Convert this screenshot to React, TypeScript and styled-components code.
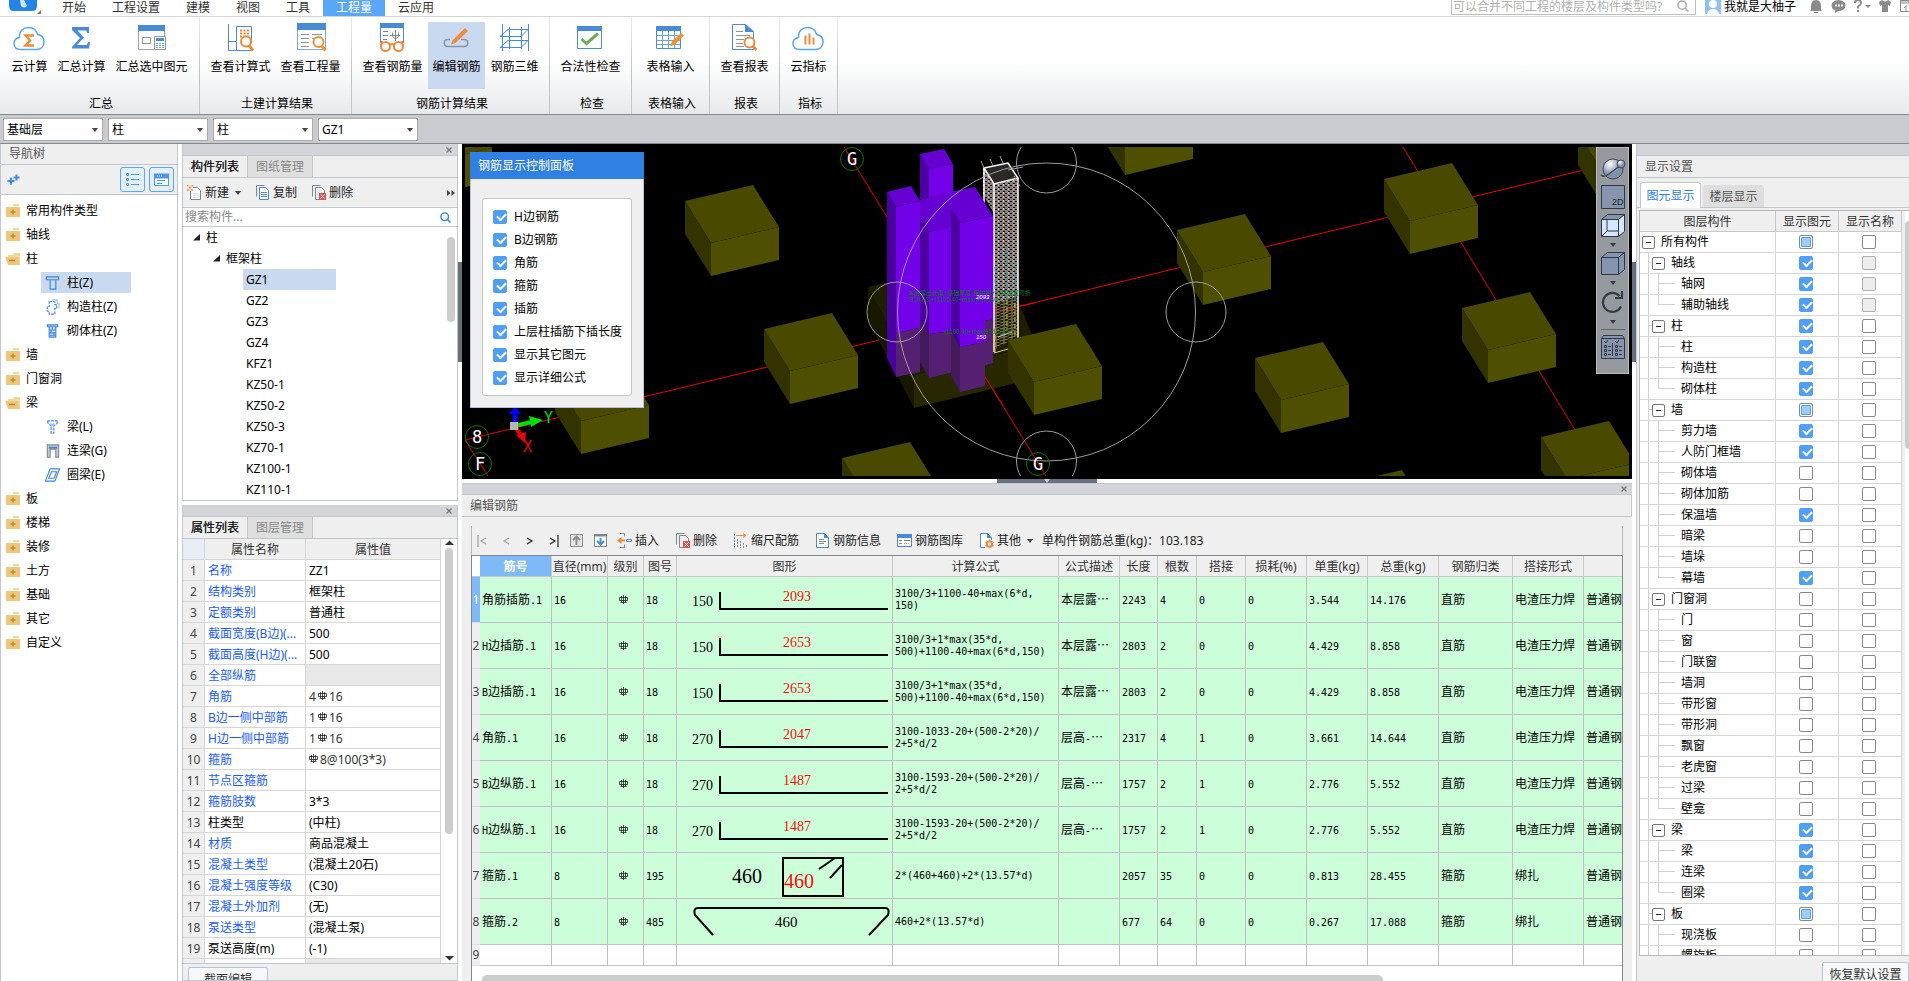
import React from 'react';
import styled, { createGlobalStyle, css } from 'styled-components';

const UI_FONT = '"Noto Sans", "Noto Sans CJK SC", sans-serif';
const LINE = '#c3c6cd';
const CELL_LINE = '#d6d6d6';
const PANEL = '#efefef';
const BLUE = '#4a8bd8';
const ORANGE = '#f08a3c';

const GlobalStyle = createGlobalStyle`
  * { box-sizing: border-box; }
  body { margin: 0; overflow: hidden; background: #fff; }
  body, button, input, select { font-family: ${UI_FONT}; font-size: 12px; line-height: 16px; color: #000; }
  button { background: none; border: 0; padding: 0; margin: 0; }
  table { border-collapse: separate; border-spacing: 0; }
  ul { list-style: none; margin: 0; padding: 0; }
  svg { display: block; flex: none; }
`;

const Page = styled.div`
  display: flex;
  flex-direction: column;
  height: 100vh;
  overflow: hidden;
  background: #fff;
`;

/* ---------- title bar ---------- */

const TitleBar = styled.header`
  display: flex;
  height: 17px;
  border-bottom: 1px solid #d4d4d4;
  overflow: hidden;
`;
const LogoCell = styled.div`
  width: 49px;
  padding-left: 8px;
`;
const MenuTab = styled.button<{ $active?: boolean }>`
  height: 16px;
  padding: 0 13px;
  line-height: 14px;
  color: #333;
  ${(p) => p.$active && css`background: #5aa6f8; color: #fff;`}
`;
const TitleTools = styled.div`
  display: flex;
  align-items: flex-start;
  height: 16px;
  margin-left: auto;
`;
const TopSearch = styled.label`
  display: flex;
  width: 245px;
  height: 15px;
  padding: 0 6px 0 1px;
  margin-right: 9px;
  border: 1px solid #bdbdbd;
  border-top: 0;
  input {
    flex: 1;
    min-width: 0;
    border: 0;
    padding: 0;
    height: 14px;
    outline: 0;
  }
  input::placeholder { color: #b0b0b0; }
`;
const UserName = styled.span`
  margin: 0 13px 0 3px;
  line-height: 13px;
`;
const TopIcon = styled.button<{ $w: number }>`
  width: ${(p) => p.$w}px;
  height: 14px;
  margin-right: 4px;
  flex: none;
`;

/* ---------- ribbon ---------- */

const Ribbon = styled.div`
  display: flex;
  height: 98px;
  border-bottom: 1px solid #85888d;
  background: linear-gradient(#fff 45%, #e7eaeb);
`;
const RibbonGroup = styled.section<{ $w: number }>`
  display: flex;
  flex-direction: column;
  align-items: center;
  width: ${(p) => p.$w}px;
  padding-top: 5px;
  border-right: 1px solid;
  border-image: linear-gradient(#eee, #bfbfbf 60%, #c8c8c8) 1;
`;
const RibbonRow = styled.div`
  display: flex;
  gap: 2px;
  height: 67px;
  margin-bottom: 7px;
`;
const RibbonButton = styled.button<{ $active?: boolean }>`
  display: flex;
  flex-direction: column;
  align-items: center;
  gap: 4px;
  padding: 1px 4px 0;
  white-space: nowrap;
  background: ${(p) => (p.$active ? '#c9d9ef' : 'transparent')};
`;
const RibbonTitle = styled.span`padding-left: 3px;`;

const FilterBar = styled.div`
  display: flex;
  gap: 5px;
  height: 29px;
  padding: 3px 3px;
  background: #c9cbd0;
  border-bottom: 1px solid #85888d;
`;
const SelectBox = styled.span`
  position: relative;
  width: 100px;
  select {
    appearance: none;
    width: 100px;
    height: 23px;
    padding: 0 3px;
    border: 1px solid #aaa;
    border-radius: 0;
    background: #fff;
  }
  svg { position: absolute; right: 5px; top: 10px; pointer-events: none; }
`;

/* ---------- workspace ---------- */

const Workspace = styled.main`
  flex: 1;
  min-height: 0;
  display: grid;
  grid-template-columns: 178px 276px minmax(0, 1fr) 273px;
  column-gap: 4px;
`;
const Panel = styled.section`
  display: flex;
  flex-direction: column;
  min-height: 0;
  min-width: 0;
  overflow: hidden;
  background: ${PANEL};
  border: solid ${LINE};
  border-width: 0 1px 1px;
`;
const NavPanel = styled(Panel)`border-bottom: 0;`;
const Strip = styled.div`
  display: flex;
  justify-content: flex-end;
  align-items: center;
  height: 12px;
  flex: none;
  padding-right: 4px;
  background: #d3d5da;
  border-bottom: 1px solid ${LINE};
  button { height: 8px; }
`;
const PanelTitle = styled.h2`
  flex: none;
  margin: 0;
  height: 22px;
  padding: 3px 8px;
  font-size: 12px;
  font-weight: normal;
  color: #555;
  border-bottom: 1px solid ${LINE};
`;
const NavTitle = styled(PanelTitle)`height: 21px; padding-top: 2px;`;
const NavTools = styled.div`
  display: flex;
  align-items: center;
  gap: 4px;
  height: 30px;
  flex: none;
  padding: 0 3px 0 6px;
  border-bottom: 1px solid ${LINE};
`;
const ViewToggle = styled.button`
  display: grid;
  place-items: center;
  width: 25px;
  height: 25px;
  border: 1px solid #5aa6f8;
  border-radius: 3px;
  background: #e3effb;
`;
const Spacer = styled.span`flex: 1;`;
const NavTree = styled.ul`
  && { padding: 4px 0; }
  display: flex;
  flex-direction: column;
  flex: 1;
  min-height: 0;
  overflow: hidden;
  background: #fff;
`;
const NavItem = styled.li`
  display: flex;
  align-items: center;
  gap: 4px;
  height: 24px;
  flex: none;
  padding-left: 4px;
`;
const NavChild = styled.li<{ $active?: boolean }>`
  display: flex;
  align-items: center;
  gap: 6px;
  width: 90px;
  height: 21px;
  flex: none;
  margin: 1px 0 2px 40px;
  padding-left: 3px;
  background: ${(p) => (p.$active ? '#c9d9ef' : 'transparent')};
`;

const MiddleColumn = styled.div`
  display: grid;
  grid-template-rows: 3fr 4fr;
  row-gap: 4px;
  min-height: 0;
`;
const Tabs = styled.div`
  display: flex;
  height: 22px;
  flex: none;
  border-bottom: 1px solid ${LINE};
`;
const Tab = styled.button<{ $active?: boolean }>`
  height: 21px;
  width: 65px;
  padding-top: 1px;
  border-right: 1px solid ${LINE};
  color: ${(p) => (p.$active ? '#222' : '#888')};
  background: ${(p) => (p.$active ? PANEL : '#dfdfdf')};
  ${(p) => p.$active && css`text-shadow: 0 0 0 #222;`}
`;
const ListTools = styled.div`
  display: flex;
  align-items: center;
  height: 30px;
  flex: none;
  gap: 14px;
  padding: 0 2px 0 4px;
  border-bottom: 1px solid ${LINE};
`;
const ToolButton = styled.button`
  display: flex;
  align-items: center;
  gap: 3px;
  color: #222;
  white-space: nowrap;
`;
const ListSearch = styled.label`
  display: flex;
  align-items: center;
  height: 19px;
  flex: none;
  padding: 0 6px 0 2px;
  background: #fff;
  border-bottom: 1px solid ${LINE};
  input { flex: 1; min-width: 0; border: 0; padding: 0; height: 16px; outline: 0; }
  input::placeholder { color: #888; }
`;
const ListBody = styled.div`
  display: flex;
  flex: 1;
  min-height: 0;
  overflow: hidden;
  background: #fff;
  padding-right: 2px;
  ul { flex: 1; }
`;
const ListItem = styled.li<{ $level: number }>`
  display: flex;
  align-items: center;
  gap: 6px;
  height: 21px;
  padding-left: ${(p) => 10 + p.$level * 20}px;
`;
const ListLeaf = styled.span<{ $active?: boolean }>`
  width: 93px;
  height: 21px;
  padding: 3px 3px 2px;
  background: ${(p) => (p.$active ? '#c9d9ef' : 'transparent')};
`;
const Thumb = styled.div<{ $h: string }>`
  width: 8px;
  height: ${(p) => p.$h};
  border-radius: 4px;
  background: #cdcdcd;
`;
const ListThumb = styled(Thumb)`margin-top: 10px;`;

const GridArea = styled.div`
  display: flex;
  flex: 1;
  min-height: 0;
  overflow: hidden;
  background: #fff;
  border-bottom: 1px solid ${LINE};
`;
const PropTable = styled.table`
  flex: none;
  width: 258px;
  height: max-content;
  table-layout: fixed;
  th, td {
    height: 21px;
    padding: 1px 3px 0;
    font-weight: normal;
    text-align: left;
    white-space: nowrap;
    overflow: hidden;
    border: solid ${CELL_LINE};
    border-width: 0 1px 1px 0;
  }
  thead th { text-align: center; color: #333; background: ${PANEL}; }
  thead th:first-child { background: #e9eef6; }
  tbody th { padding: 1px 0 0; text-align: center; color: #444; background: ${PANEL}; }
`;
const PropName = styled.td<{ $plain?: boolean }>`
  color: ${(p) => (p.$plain ? '#000' : '#1a5cff')};
`;
const PropValue = styled.td<{ $group?: boolean }>`
  background: ${(p) => (p.$group ? '#e8e8e8' : '#fff')};
`;
const RebarValue = styled.span`
  display: flex;
  gap: 2px;
  color: #333;
  svg { margin-top: 2px; }
`;
const ScrollColumn = styled.div`
  display: flex;
  flex-direction: column;
  align-items: center;
  flex: 1;
  min-width: 0;
  padding: 1px 0 2px;
  gap: 2px;
`;
const PropFooter = styled.div`
  height: 16px;
  flex: none;
  padding: 3px 0 0 5px;
  overflow: hidden;
`;
const OutlineButton = styled.button<{ $w: number }>`
  width: ${(p) => p.$w}px;
  height: 26px;
  flex: none;
  border: 1px solid #b8c3da;
  border-radius: 2px;
  background: #f7f8fa;
  color: #333;
`;

/* ---------- viewport ---------- */

const CenterColumn = styled.div`
  display: grid;
  grid-template-rows: 335fr 498fr;
  row-gap: 4px;
  min-width: 0;
  min-height: 0;
`;
const Viewport = styled.section`
  position: relative;
  min-height: 0;
  background: #000;
  > svg { width: 100%; height: 100%; }
`;
const Handle = styled.button<{ $side: 'left' | 'right' | 'bottom' }>`
  position: absolute;
  display: grid;
  place-items: center;
  background: #66707c;
  ${(p) => p.$side === 'left' && css`left: -4px; top: 118px; width: 4px; height: 100px;`}
  ${(p) => p.$side === 'right' && css`right: -4px; top: 118px; width: 4px; height: 100px;`}
  ${(p) => p.$side === 'bottom' && css`left: calc(50% - 50px); bottom: -4px; width: 100px; height: 4px;`}
`;
const Dialog = styled.div`
  position: absolute;
  left: 8px;
  top: 8px;
  width: 174px;
  background: ${PANEL};
  border: 1px solid #b9c4dc;
  border-top: 0;
  padding-bottom: 11px;
`;
const DialogTitle = styled.div`
  height: 27px;
  margin: 0 -1px 19px;
  padding: 6px 8px;
  color: #fff;
  background: #2f80e2;
`;
const DialogBox = styled.div`
  margin: 0 11px;
  padding: 6px 10px;
  border: 1px solid ${LINE};
  border-radius: 3px;
  background: #fff;
`;
const CheckRow = styled.label`
  display: flex;
  align-items: center;
  gap: 7px;
  height: 23px;
  white-space: nowrap;
`;
const Check = styled.input.attrs({ type: 'checkbox' })<{ $mixed?: boolean }>`
  appearance: none;
  position: relative;
  flex: none;
  width: 14px;
  height: 14px;
  margin: 0;
  border: 1px solid #8a8a8a;
  border-radius: 2px;
  background: #fff;
  &:checked { border-color: #4f9ff8; background: #4f9ff8; }
  &:checked::before {
    content: '';
    position: absolute;
    left: 3px;
    top: 2px;
    width: 7px;
    height: 4px;
    border: solid #fff;
    border-width: 0 0 2px 2px;
    transform: rotate(-45deg);
  }
  &:disabled { background: #ededed; border-color: #b0b0b0; }
  ${(p) => p.$mixed && css`
    &::after {
      content: '';
      position: absolute;
      inset: 1px;
      border: 1px solid #4f9ff8;
      border-radius: 1px;
      background: #a0cbfb;
    }
  `}
`;
const ViewTools = styled.div`
  position: absolute;
  right: 3px;
  top: 3px;
  width: 33px;
  height: 227px;
  padding-top: 10px;
  display: flex;
  flex-direction: column;
  align-items: center;
  gap: 5px;
  background: #96999e;
  border: 1px solid #b9bcc0;
`;
const ViewTool = styled.button`
  display: flex;
  flex-direction: column;
  align-items: center;
  gap: 6px;
`;
const ToolRule = styled.div`
  width: 24px;
  height: 1px;
  background: #6a6a6a;
`;

/* ---------- rebar editor ---------- */

const EditorPanel = styled(Panel)`border-width: 1px 0 0;`;
const EditorTitle = styled(PanelTitle)`border-right: 1px solid ${LINE};`;
const EditorStrip = styled(Strip)`height: 11px;`;
const EditorBody = styled.div`
  display: flex;
  flex-direction: column;
  flex: 1;
  min-height: 0;
  padding: 9px 9px 0;
`;
const EditorTools = styled.div`
  display: flex;
  align-items: center;
  height: 29px;
  flex: none;
  padding-left: 5px;
  gap: 16px;
  border: solid #b5b5bb;
  border-width: 0 1px 0 1px;
  white-space: nowrap;
  color: #222;
`;
const ToolCluster = styled.div`
  display: flex;
  align-items: center;
  gap: 9px;
`;
const StepButton = styled.button<{ $off?: boolean }>`
  width: 14px;
  height: 14px;
  svg path { stroke: ${(p) => (p.$off ? '#a0a0a0' : '#222')}; }
`;
const SheetFrame = styled.div`
  display: flex;
  flex-direction: column;
  flex: 1;
  min-height: 0;
  overflow: hidden;
  background: #fff;
  border: solid #85858f;
  border-width: 1px 1px 0 1px;
`;
const SheetTable = styled.table`
  width: 100%;
  table-layout: fixed;
  th, td {
    padding: 0 2px;
    font-weight: normal;
    text-align: left;
    white-space: nowrap;
    overflow: hidden;
    border: solid #c2bfc4;
    border-width: 0 1px 1px 0;
  }
  tr > :last-child { border-right: 0; }
  thead th {
    height: 21px;
    padding: 1px 0 0;
    text-align: center;
    color: #333;
    background: ${PANEL};
    border-color: #c9c9c9;
  }
  thead th:nth-child(2) { background: #7fbaf8; color: #fff; font-weight: bold; }
  thead th:first-child { background: #fff; border-right: 0; }
`;
const SheetRow = styled.tr<{ $empty?: boolean }>`
  td { height: ${(p) => (p.$empty ? 21 : 46)}px; background: ${(p) => (p.$empty ? '#fff' : '#ccffd9')}; }
`;
const RowHead = styled.th<{ $active?: boolean }>`
  && {
    padding: 0;
    text-align: center;
    border-right: 0;
    border-color: #ddd;
    color: ${(p) => (p.$active ? '#fff' : '#444')};
    background: ${(p) => (p.$active ? '#7fbaf8' : PANEL)};
  }
`;
const GradeBox = styled.span`
  display: flex;
  justify-content: center;
  padding-right: 4px;
`;
const ShapeCell = styled.td`
  && { padding: 0; }
  svg { width: 215px; height: 45px; }
`;
const Formula = styled.span`
  display: block;
  font: 10px/12px "DejaVu Sans Mono", monospace;
  white-space: pre-line;
`;
const Mono = styled.span`font: 10px/14px "DejaVu Sans Mono", monospace;`;
const Han = styled.span`font-family: "Noto Sans CJK SC", sans-serif;`;
const SheetScroll = styled.div`
  margin-top: auto;
  height: 6px;
  padding-left: 10px;
  overflow: hidden;
`;
const SheetThumb = styled.div`
  width: 79%;
  height: 10px;
  border-radius: 5px;
  background: #cdcdcd;
`;

/* ---------- display settings ---------- */

const DisplayPanel = styled(Panel)`border-width: 0 0 0 1px;`;
const CardTabs = styled.div`
  display: flex;
  align-items: flex-end;
  gap: 2px;
  height: 30px;
  flex: none;
  padding-left: 3px;
  border-bottom: 1px solid ${LINE};
`;
const CardTab = styled.button<{ $active?: boolean }>`
  width: 61px;
  height: ${(p) => (p.$active ? 26 : 22)}px;
  padding-top: 1px;
  margin-bottom: ${(p) => (p.$active ? -1 : 0)}px;
  border-radius: 3px 3px 0 0;
  color: ${(p) => (p.$active ? '#2f80e2' : '#555')};
  background: ${(p) => (p.$active ? '#fff' : '#dedede')};
  ${(p) => p.$active && css`border: 1px solid ${LINE}; border-bottom: 0;`}
`;
const DisplayArea = styled.div`
  display: flex;
  flex: 1;
  min-height: 0;
  margin: 2px 0 0 2px;
  overflow: hidden;
  border: solid #b8b8bc;
  border-width: 1px 0 1px 1px;
`;
const DisplayTable = styled.table`
  flex: none;
  width: 262px;
  height: max-content;
  table-layout: fixed;
  background: #fff;
  th, td {
    height: 21px;
    padding: 0;
    font-weight: normal;
    border: solid ${CELL_LINE};
    border-width: 0 1px 1px 0;
  }
  th { padding-top: 1px; color: #333; background: ${PANEL}; border-color: #c8c8c8; }
`;
const CheckCell = styled.td`
  && { padding: 0 2px 1px 0; }
  input { display: block; margin: 0 auto; }
`;
const TreeCell = styled.div`
  display: flex;
  align-items: center;
  height: 20px;
  overflow: hidden;
  white-space: nowrap;
`;
const Guide = styled.span<{ $w: number }>`
  width: ${(p) => p.$w}px;
  height: 20px;
  margin-left: 8px;
  border-left: 1px solid #d0d0d0;
  background: ${(p) => (p.$w === 4 ? 'linear-gradient(#d0d0d0, #d0d0d0) 0 9px / 4px 1px no-repeat' : 'none')};
`;
const Branch = styled.span<{ $last?: boolean }>`
  width: 17px;
  height: 20px;
  margin-right: 6px;
  background:
    linear-gradient(#d0d0d0, #d0d0d0) 0 0 / 1px ${(p) => (p.$last ? '10px' : '20px')} no-repeat,
    linear-gradient(#d0d0d0, #d0d0d0) 0 9px / 17px 1px no-repeat;
`;
const Expander = styled.button<{ $root?: boolean }>`
  display: grid;
  place-items: center;
  width: 13px;
  height: 13px;
  margin: 0 6px 0 ${(p) => (p.$root ? 2 : 0)}px;
  border: 1px solid #777;
  border-radius: 2px;
  background: #fff;
  &::before { content: ''; width: 5px; height: 1px; background: #222; }
`;
const EdgeScroll = styled.div`
  flex: 1;
  min-width: 0;
  margin-left: 3px;
  padding-top: 10px;
  overflow: hidden;
  background: #fff;
`;
const DisplayFooter = styled.div`
  display: flex;
  justify-content: flex-end;
  height: 25px;
  flex: none;
  padding-top: 6px;
  overflow: hidden;
`;

/* ---------- icons ---------- */

const Caret = ({ color = '#444' }: { color?: string }) => (
  <svg width="6" height="4" viewBox="0 0 6 4"><path d="M0 0h6L3 4z" fill={color} /></svg>
);
const ScrollArrow = ({ down }: { down?: boolean }) => (
  <svg width="9" height="6" viewBox="0 0 9 6"><path d={down ? 'M0 1h9L4.5 5.5z' : 'M0 5h9L4.5 .5z'} fill="#333" /></svg>
);
const CloseX = () => (
  <svg width="8" height="8" viewBox="0 0 8 8"><path d="M1.500 1.500l5 5M6.500 1.500l-5 5" stroke="#777" strokeWidth="1.300" /></svg>
);
const Magnifier = ({ color, size = 11 }: { color: string; size?: number }) => (
  <svg width={size} height={size} viewBox="0 0 11 11" fill="none" stroke={color} strokeWidth="1.400">
    <circle cx="4.700" cy="4.700" r="3.800" /><path d="M7.500 7.500l3 3" />
  </svg>
);
const RebarMark = () => (
  <svg width="9" height="9" viewBox="0 0 9 9" fill="none" stroke="#222">
    <path d="M.5 2.5h8v3h-8zM4.5 0v9M2.5 1v6M6.500 1v6" strokeWidth=".8" />
    <path d="M1.500 7.500h6" strokeWidth=".8" />
  </svg>
);
const Folder = ({ open }: { open?: boolean }) => (
  <svg width="17" height="14" viewBox="0 0 17 14">
    {open ? (
      <>
        <path d="M3 3h5l1-2h6v11H3z" fill="#f3d699" />
        <path d="M0 5h13l2 8H3z" fill="#ecc77d" />
        <path d="M4 8.500h6" stroke="#b98422" strokeWidth="1.500" />
      </>
    ) : (
      <>
        <path d="M8 0h6v2H8z" fill="#f3d699" />
        <path d="M1 3h14v10H1z" fill="#ecc77d" />
        <path d="M8 5.500v5M5.500 8h5" stroke="#c08c2c" strokeWidth="1.500" />
      </>
    )}
  </svg>
);

const NAV_ICONS: Record<string, React.ReactNode> = {
  column: <path d="M2.500 1.500h13v3h-3v10h-6v-10h-4zM5 4.500h9" />,
  tie: <><path d="M5.500 2.500h6v3h2v4h-2v6h-6v-3h-2v-5h2z" strokeDasharray="3 1" /><path d="M9 .5h5v4h2v5" stroke="#9cc0ea" /></>,
  masonry: <><path d="M3.500 1.500h11v2h-11zM5.500 4v10.500h7V4" fill="#cfe1f6" /><path d="M5.500 7h7M5.500 10h7M5.500 12.500h7M9 4v3M7.500 7v3M10.500 10v3" /></>,
  beam: <><path d="M3.500 1.500h11l-1 3-3 2v8h-3v-8l-3-2z" strokeDasharray="3 1" /><path d="M7 4l4 4M7 8l4-4" stroke="#9cc0ea" /></>,
  link: <><path d="M3.500 1.500h12v13h-3V6h-6v8.500h-3z" stroke="#848b94" fill="#c9ccd1" /><path d="M5 4.500h9" strokeWidth="2" /></>,
  ring: <><path d="M6.500 1.500h10l-5 13h-10z" /><path d="M8 4.500h5.500l-3 7H5z" /></>,
};
const NavIcon = ({ name }: { name: string }) => (
  <svg width="17" height="16" viewBox="0 0 18 16" fill="none" stroke="#3f86d8" strokeWidth="1.200">{NAV_ICONS[name]}</svg>
);

const CLOUD = 'M8 26.500C3.500 26.500 1 24 1 20.500c0-3.500 2.500-5.500 5.500-6C6 8 10.500 4.500 15.500 4.500c4.500 0 8 2.500 9 7 4 .5 6.500 3.500 6.500 7.500 0 4.500-3 7.500-7.500 7.500z';
const RIBBON_ICONS: Record<string, React.ReactNode> = {
  cloudSum: (
    <>
      <path d={CLOUD} fill="none" stroke="#5aa6f0" strokeWidth="1.500" />
      <path d="M21 12.500h-8.500l4.500 5-4.500 5H21" fill="none" stroke={ORANGE} strokeWidth="2.400" />
    </>
  ),
  sum: <path d="M7 4h17v6h-1.500L21 7.500h-8.500l6.500 7-7 7.500h9.500l2-3H25l-1 6.500H7V24l8-9L7 7z" fill={BLUE} />,
  sumSel: (
    <>
      <path d="M2.500 2.500h26v24h-26z" fill="#fff" stroke="#9aa3ad" /><path d="M2 2h27v6H2z" fill={BLUE} />
      <path d="M6.500 14.500h8v6h-8z" fill="none" stroke="#8d959e" />
      <path d="M18.500 13.500h11v13h-11z" fill="#fff" stroke="#8d959e" /><path d="M20 15h8v3h-8z" fill={BLUE} />
      <path d="M21 20v5M24 20v5M27 20v5" stroke={BLUE} strokeWidth="1.500" strokeDasharray="1 1" />
    </>
  ),
  viewCalc: (
    <>
      <path d="M4.500 1v26.500H29M4.500 18.500h8v9M12.500 18V3.500h15V20" fill="none" stroke={BLUE} />
      <path d="M16 7.500h9M16 10.500h9M16 13.500h9" stroke={ORANGE} strokeWidth="2" strokeDasharray="2 1.500" />
      <circle cx="22" cy="18.500" r="5" fill="#fff" stroke={ORANGE} strokeWidth="2" /><path d="M25 22.500l4 5" stroke={ORANGE} strokeWidth="3" />
    </>
  ),
  viewQty: (
    <>
      <path d="M2.500 .5h28v26h-28z" fill="#fff" stroke="#7aa9df" /><path d="M2 0h29v7H2z" fill={BLUE} />
      <path d="M6 11.500h8M6 15.500h8M6 19.500h8M6 23.500h8M17 11.500h10M17 15.500h6" stroke="#8d959e" />
      <circle cx="23.500" cy="19" r="5" fill="#fff" stroke="#f0922e" strokeWidth="2" /><path d="M26.500 22.500l4 5" stroke="#f0922e" strokeWidth="3" />
    </>
  ),
  viewRebar: (
    <>
      <path d="M4.500 20V.5h23V20" fill="#fff" stroke={BLUE} /><path d="M4 0h24v5H4z" fill={BLUE} />
      <path d="M7 8.500h5M7 12.500h5M7 16.500h4M14 12.500h10M19.500 7v11M16.500 9.500v4q3 4 6 0v-4" fill="none" stroke="#7d8791" />
      <g fill="#fff" stroke={ORANGE} strokeWidth="2"><circle cx="9.500" cy="23.500" r="4.500" /><circle cx="22.500" cy="23.500" r="4.500" /><path d="M14 22q2-2 4 0M5 22l1-4M27 22l-1-4" /></g>
    </>
  ),
  editRebar: (
    <>
      <path d="M10 16.500H8c-5 0-5 7 0 7h16c5 0 5-7 0-7h-3" fill="none" stroke="#8b95a3" strokeWidth="1.500" />
      <path d="M25 5l3 3-12.500 12-4.500 1.500 1.500-4z" fill={ORANGE} />
    </>
  ),
  rebar3d: (
    <path d="M3.500 1v27M10.500 4v22M22.500 4v22M29.500 1v27M1 13.500h21l7-7H9zM1 24.500h21l7-7H9z" fill="none" stroke={BLUE} />
  ),
  check: (
    <>
      <path d="M3.500 3.500h24v22h-24z" fill="#fff" stroke={BLUE} /><path d="M3 3h25v5H3z" fill={BLUE} />
      <path d="M7.500 16l5 4.500L24 10.500" fill="none" stroke="#6fae54" strokeWidth="3" />
    </>
  ),
  tableIn: (
    <>
      <path d="M2.500 3.500h24v22h-24z" fill="#fff" stroke={BLUE} /><path d="M2 3h25v5H2z" fill={BLUE} />
      <path d="M8.500 8v17M14.500 8v17M20.500 8v17M3 12.500h23M3 17.500h23M3 21.500h23" stroke="#69a0de" fill="none" />
      <path d="M27 10l3 2.500-9 9-5 2 2-5z" fill="#f0922e" />
    </>
  ),
  report: (
    <>
      <path d="M4.500 1.500h13l8 7v18h-21z" fill="#fff" stroke={BLUE} /><path d="M17 1l9 8h-9z" fill={BLUE} />
      <path d="M8 8.500h7M8 12.500h14M8 16.500h8M8 20.500h7M8 23.500h8" stroke="#8d959e" />
      <circle cx="21.500" cy="19.500" r="5" fill="#fff" stroke={ORANGE} strokeWidth="2" /><path d="M25 23.500l3.500 3.500" stroke={ORANGE} strokeWidth="3" />
    </>
  ),
  cloudIdx: (
    <>
      <path d={CLOUD} fill="none" stroke="#5aa6f0" strokeWidth="1.500" />
      <path d="M13.500 12.500v9M17.500 10.500v11M21.500 14.500v7" stroke={ORANGE} strokeWidth="2" />
    </>
  ),
};
const RibbonIcon = ({ name }: { name: string }) => (
  <svg width="32" height="32" viewBox="0 0 32 32">{RIBBON_ICONS[name]}</svg>
);

const TOOL_ICONS: Record<string, React.ReactNode> = {
  add: <><path d="M3.500 2.500h7l3 3v9h-10z" fill="#fff" stroke="#7d8791" /><path d="M5.500 8.500h6M5.500 10.500h6M5.500 12.500h6" stroke="#d4d8dc" /><path d="M0 0h6v6H0z" fill={PANEL} /><path d="M0 0l6 6M6 0L0 6" stroke={ORANGE} strokeDasharray="2 1" strokeWidth="1.500" /></>,
  copy: <><path d="M1.500 11.500v-11h8" fill="none" stroke="#7d8791" /><path d="M4.500 2.500h6l3 3v9h-9z" fill="#fff" stroke={BLUE} /><path d="M6 7.500h6M6 9.500h6M6 11.500h6" stroke={BLUE} /></>,
  remove: <><path d="M1.500 11.500v-11h8M8 14.500H4.500v-12h6l3 3V8" fill="none" stroke="#7d8791" /><path d="M8 8h7v7H8z" fill="#e05252" /><path d="M9.500 9.500l4 4M13.500 9.500l-4 4" stroke="#fff" /></>,
  up: <><path d="M1.500 1.500h12v12h-12z" fill="#e4e4e4" stroke="#8d8d8d" /><path d="M7.500 4v8M4 7l3.500-3.500L11 7" fill="none" stroke="#8d8d8d" strokeWidth="2" /></>,
  down: <><path d="M1.500 1.500h12v12h-12z" fill="#fff" stroke="#7d8791" /><path d="M1 1h13v2.500H1z" fill="#7d8791" /><path d="M7.500 5v6M4 8l3.500 3.500L11 8" fill="none" stroke={BLUE} strokeWidth="2" /></>,
  insert: <><path d="M3 .5h4.500v3M3 14.500h4.500v-3" fill="none" stroke="#7d8791" /><path d="M9.500 6.500h5v2h-5z" fill="none" stroke={BLUE} /><path d="M3 7.500h5" stroke={ORANGE} strokeWidth="2" /><path d="M4.500 4v7L0 7.500z" fill={ORANGE} /></>,
  scale: <><path d="M1.500 1v13.500" stroke={BLUE} strokeDasharray="2 1" /><path d="M3 2.500h9M10 .5l3 2-3 2" fill="none" stroke={ORANGE} /><path d="M4.500 6v9M7.500 8v7M10.500 10v5M13.500 12v3" stroke="#7d8791" strokeDasharray="2 1" /></>,
  info: <><path d="M1.500 .5h8l4 4v10h-12z" fill="#fff" stroke={BLUE} /><path d="M9 0l5 5H9z" fill={BLUE} /><path d="M4 6.500h5M4 8.500h7M4 10.500h5" stroke="#7d8791" /></>,
  gallery: <><path d="M.5 1.500h14v12H.5z" fill="#fff" stroke={BLUE} /><path d="M0 1h15v4H0z" fill={BLUE} /><path d="M2 7.500h3M7 7.500h6M2 10.500h3" stroke="#7d8791" /><path d="M7 10.500h6" stroke={ORANGE} strokeDasharray="1 1" /></>,
  other: <><path d="M6 14.500H1.500V.5h7l4 4V7" fill="#fff" stroke={BLUE} /><path d="M8 0l5 5H8z" fill={BLUE} /><circle cx="10.500" cy="11" r="2.700" fill="#fff" stroke={ORANGE} strokeWidth="2" /><path d="M10.500 6.500v2M10.500 13.500v2M6.500 9l1.500.8M13 12.200l1.500.8M6.500 13l1.500-.8M13 9.800l1.500-.8" stroke={ORANGE} strokeWidth="1.500" /></>,
};
const ToolIcon = ({ name }: { name: string }) => (
  <svg width="15" height="15" viewBox="0 0 15 15">{TOOL_ICONS[name]}</svg>
);

/* ---------- data ---------- */

const MENUS = ['开始', '工程设置', '建模', '视图', '工具', '工程量', '云应用'];

const RIBBON: { title: string; w: number; items: [string, string][] }[] = [
  { title: '汇总', w: 200, items: [['cloudSum', '云计算'], ['sum', '汇总计算'], ['sumSel', '汇总选中图元']] },
  { title: '土建计算结果', w: 152, items: [['viewCalc', '查看计算式'], ['viewQty', '查看工程量']] },
  { title: '钢筋计算结果', w: 198, items: [['viewRebar', '查看钢筋量'], ['editRebar', '编辑钢筋'], ['rebar3d', '钢筋三维']] },
  { title: '检查', w: 82, items: [['check', '合法性检查']] },
  { title: '表格输入', w: 78, items: [['tableIn', '表格输入']] },
  { title: '报表', w: 70, items: [['report', '查看报表']] },
  { title: '指标', w: 58, items: [['cloudIdx', '云指标']] },
];

const NAV: { label: string; open?: boolean; children?: [string, string][] }[] = [
  { label: '常用构件类型' },
  { label: '轴线' },
  { label: '柱', open: true, children: [['column', '柱(Z)'], ['tie', '构造柱(Z)'], ['masonry', '砌体柱(Z)']] },
  { label: '墙' },
  { label: '门窗洞' },
  { label: '梁', open: true, children: [['beam', '梁(L)'], ['link', '连梁(G)'], ['ring', '圈梁(E)']] },
  { label: '板' }, { label: '楼梯' }, { label: '装修' }, { label: '土方' }, { label: '基础' }, { label: '其它' }, { label: '自定义' },
];

const MEMBERS = ['GZ1', 'GZ2', 'GZ3', 'GZ4', 'KFZ1', 'KZ50-1', 'KZ50-2', 'KZ50-3', 'KZ70-1', 'KZ100-1', 'KZ110-1'];

type Prop = { name: string; value: string; plain?: boolean; group?: boolean; rebar?: boolean };
const PROPS: Prop[] = [
  { name: '名称', value: 'ZZ1' },
  { name: '结构类别', value: '框架柱' },
  { name: '定额类别', value: '普通柱' },
  { name: '截面宽度(B边)(...', value: '500' },
  { name: '截面高度(H边)(...', value: '500' },
  { name: '全部纵筋', value: '', group: true },
  { name: '角筋', value: '4|16', rebar: true },
  { name: 'B边一侧中部筋', value: '1|16', rebar: true },
  { name: 'H边一侧中部筋', value: '1|16', rebar: true },
  { name: '箍筋', value: '|8@100(3*3)', rebar: true },
  { name: '节点区箍筋', value: '' },
  { name: '箍筋肢数', value: '3*3' },
  { name: '柱类型', value: '(中柱)', plain: true },
  { name: '材质', value: '商品混凝土' },
  { name: '混凝土类型', value: '(混凝土20石)' },
  { name: '混凝土强度等级', value: '(C30)' },
  { name: '混凝土外加剂', value: '(无)' },
  { name: '泵送类型', value: '(混凝土泵)' },
  { name: '泵送高度(m)', value: '(-1)', plain: true },
];

const REBAR_CHECKS = ['H边钢筋', 'B边钢筋', '角筋', '箍筋', '插筋', '上层柱插筋下插长度', '显示其它图元', '显示详细公式'];

const SHEET_COLS: [string, number | undefined][] = [
  ['', 8], ['筋号', 72], ['直径(mm)', 56], ['级别', 36], ['图号', 33], ['图形', 216], ['计算公式', 166],
  ['公式描述', 61], ['长度', 38], ['根数', 39], ['搭接', 49], ['损耗(%)', 61], ['单重(kg)', 61],
  ['总重(kg)', 71], ['钢筋归类', 74], ['搭接形式', 71], ['', undefined],
];

type Bar = {
  name: string; dia: string; no: string; shape: [string, string]; formula: string; desc: string;
  len: string; count: string; lap: string; unit: string; total: string; kind: string; joint: string;
};
const BARS: Bar[] = [
  { name: '角筋插筋.1', dia: '16', no: '18', shape: ['150', '2093'], formula: '3100/3+1100-40+max(6*d,\n150)', desc: '本层露…', len: '2243', count: '4', lap: '0', unit: '3.544', total: '14.176', kind: '直筋', joint: '电渣压力焊' },
  { name: 'H边插筋.1', dia: '16', no: '18', shape: ['150', '2653'], formula: '3100/3+1*max(35*d,\n500)+1100-40+max(6*d,150)', desc: '本层露…', len: '2803', count: '2', lap: '0', unit: '4.429', total: '8.858', kind: '直筋', joint: '电渣压力焊' },
  { name: 'B边插筋.1', dia: '16', no: '18', shape: ['150', '2653'], formula: '3100/3+1*max(35*d,\n500)+1100-40+max(6*d,150)', desc: '本层露…', len: '2803', count: '2', lap: '0', unit: '4.429', total: '8.858', kind: '直筋', joint: '电渣压力焊' },
  { name: '角筋.1', dia: '16', no: '18', shape: ['270', '2047'], formula: '3100-1033-20+(500-2*20)/\n2+5*d/2', desc: '层高-…', len: '2317', count: '4', lap: '1', unit: '3.661', total: '14.644', kind: '直筋', joint: '电渣压力焊' },
  { name: 'B边纵筋.1', dia: '16', no: '18', shape: ['270', '1487'], formula: '3100-1593-20+(500-2*20)/\n2+5*d/2', desc: '层高-…', len: '1757', count: '2', lap: '1', unit: '2.776', total: '5.552', kind: '直筋', joint: '电渣压力焊' },
  { name: 'H边纵筋.1', dia: '16', no: '18', shape: ['270', '1487'], formula: '3100-1593-20+(500-2*20)/\n2+5*d/2', desc: '层高-…', len: '1757', count: '2', lap: '1', unit: '2.776', total: '5.552', kind: '直筋', joint: '电渣压力焊' },
  { name: '箍筋.1', dia: '8', no: '195', shape: ['460', '460'], formula: '2*(460+460)+2*(13.57*d)', desc: '', len: '2057', count: '35', lap: '0', unit: '0.813', total: '28.455', kind: '箍筋', joint: '绑扎' },
  { name: '箍筋.2', dia: '8', no: '485', shape: ['', '460'], formula: '460+2*(13.57*d)', desc: '', len: '677', count: '64', lap: '0', unit: '0.267', total: '17.088', kind: '箍筋', joint: '绑扎' },
];

type Mark = 'on' | 'off' | 'mixed';
type Layer = { label: string; mark: Mark; children?: [string, Mark][] };
const LAYERS: Layer[] = [
  { label: '轴线', mark: 'on', children: [['轴网', 'on'], ['辅助轴线', 'on']] },
  { label: '柱', mark: 'on', children: [['柱', 'on'], ['构造柱', 'on'], ['砌体柱', 'on']] },
  { label: '墙', mark: 'mixed', children: [['剪力墙', 'on'], ['人防门框墙', 'on'], ['砌体墙', 'off'], ['砌体加筋', 'off'], ['保温墙', 'on'], ['暗梁', 'off'], ['墙垛', 'off'], ['幕墙', 'on']] },
  { label: '门窗洞', mark: 'off', children: [['门', 'off'], ['窗', 'off'], ['门联窗', 'off'], ['墙洞', 'off'], ['带形窗', 'off'], ['带形洞', 'off'], ['飘窗', 'off'], ['老虎窗', 'off'], ['过梁', 'off'], ['壁龛', 'off']] },
  { label: '梁', mark: 'on', children: [['梁', 'on'], ['连梁', 'on'], ['圈梁', 'on']] },
  { label: '板', mark: 'mixed', children: [['现浇板', 'off'], ['螺旋板', 'off']] },
];

/* ---------- scene ---------- */

/* Each footing is placed by the front corner of its top face. */
const FOOTINGS: [number, number][] = [
  [424, 164], [711, 243], [790, 371], [581, 421], [868, 500], [1203, 272], [1410, 221],
  [1281, 400], [1488, 350], [1567, 479], [1125, 142], [1604, 174], [1360, 528],
];
const Footing = ({ x, y }: { x: number; y: number }) => (
  <g transform={`translate(${x} ${y})`}>
    <path d="M0 0l-26-42v33L0 33z" fill="#333300" />
    <path d="M0 0l68-16v33L0 33z" fill="#4f4f00" />
    <path d="M0 0l-26-42 68-16 26 42z" fill="#494900" />
  </g>
);
const AxisBubble = ({ x, y, name }: { x: number; y: number; name: string }) => (
  <g>
    <circle cx={x} cy={y} r="11.500" fill="none" stroke="#007a00" />
    <text x={x} y={y + 6} textAnchor="middle" fontFamily="DejaVu Sans Mono, monospace" fontSize="17" fill="#fff">{name}</text>
  </g>
);

const Scene = () => (
  <svg viewBox="462 144 1170 335" preserveAspectRatio="xMidYMid slice" role="img" aria-label="三维视图">
    <defs>
      <clipPath id="view"><path d="M465 147h1164v329H465z" /></clipPath>
      <pattern id="mesh" width="5" height="4" patternUnits="userSpaceOnUse">
        <path d="M0 0h5v4H0z" fill="#8d7f7a" />
        <path d="M0 1h2v1H0zM3 3h2v1H3z" fill="#000" />
        <path d="M3 0h1v2H3z" fill="#c5bab4" />
      </pattern>
      <pattern id="meshThin" width="8" height="6" patternUnits="userSpaceOnUse">
        <path d="M0 2l8-2M0 5l8-2M4 0v6" stroke="#84796f" fill="none" />
      </pattern>
    </defs>
    <g clipPath="url(#view)">
      <g stroke="#e80000" fill="none">
        <path d="M465 440L1640 156.500" />
        <path d="M844 147l202 329" />
        <path d="M1403 147l200 329" />
        <path d="M465 440l23 36" />
      </g>
      <path d="M868 287l46 88v33l-46-88z" fill="#181800" />
      <path d="M914 375l122-30v33l-122 30z" fill="#272700" />
      <path d="M868 287l132-32 36 90-122 30z" fill="#1f1f00" />
      <path d="M973 357l30 49" stroke="#e80000" />
      <path d="M990 313.500l46-11" stroke="#e80000" />
      {FOOTINGS.map(([x, y]) => <Footing key={`${x}-${y}`} x={x} y={y} />)}

      {/* rebar cage */}
      <path d="M983 168l11 16v30l-11-20z" fill="url(#mesh)" />
      <path d="M994 184l24-6v118l-24 8z" fill="url(#mesh)" />
      <path d="M994 304l24-8v40l-24 14z" fill="url(#meshThin)" />
      <path d="M984 168l24-5 10 15-24 6z" fill="#2c2826" stroke="#fff" strokeWidth="1.500" />
      <path d="M984 168v42M994 184v168M1018 178v160" stroke="#fff" strokeWidth="1.500" fill="none" />
      <path d="M984 168l-3-7M993 166l-3-7M1003 163l-3-7M1008 170l15-3M1014 176l6 10" stroke="#a89c94" />
      <path d="M1015 262v46M1007 248v50M995 268v24" stroke="#00c8c8" strokeDasharray="3 3" />
      <path d="M1015 303v34M1007 300v30M995 328v25" stroke="#c8c800" strokeDasharray="5 2" />
      <path d="M994 353l14-4M998 337l14-5" stroke="#d8d0b0" />

      {/* columns around the cage; the parts below ground are dimmed */}
      <path d="M920 154l9 15v34l-9-4z" fill="#4c00a2" />
      <path d="M929 169l24-5v31l-24 8z" fill="#7400ea" />
      <path d="M920 154l24-5 9 15-24 5z" fill="#6600d2" />

      <path d="M887 192l9 15v170l-9-19z" fill="#4800a0" />
      <path d="M896 207l24-6v127l-24 5z" fill="#7200e8" />
      <path d="M896 333l24-5v44l-24 5z" fill="#562072" />
      <path d="M887 192l24-6 9 15-24 6z" fill="#6600d2" />

      <path d="M920 217l9 15v102l-9-16z" fill="#4c00a2" />
      <path d="M920 318l9 16v44l-9-16z" fill="#431a5c" />
      <path d="M929 232l24-6v105l-24 3z" fill="#7200e8" />
      <path d="M929 334l24-3v41l-24 6z" fill="#562072" />
      <path d="M920 200l34-9v35l-25 6-9-15z" fill="#6600d2" />

      <path d="M951 208l9 15v124l-9-16z" fill="#4c00a2" />
      <path d="M951 331l9 16v45l-9-16z" fill="#431a5c" />
      <path d="M960 223l33-7v103l-8 2v21l-25 5z" fill="#7200e8" />
      <path d="M960 347l25-5v-21l8-2v44l-8 2v21l-25 6z" fill="#562072" />
      <path d="M951 208l-1-16 25-5 18 29-33 7z" fill="#6600d2" />
      <Footing x={1034} y={382} />

      <g fill="#0c7a28" fontFamily="Noto Sans CJK SC, sans-serif" fontSize="6">
        <text x="908" y="295">本层露出长度+基础厚度-保护层+计算设置弯折</text>
        <text x="908" y="302">(3100/3)+(1100-40+max(6*d,150))</text>
        <text x="944" y="334">(1100-40+max(6*d,150))</text>
      </g>
      <g fill="#fff" fontFamily="Liberation Sans, sans-serif" fontSize="6" fontStyle="italic">
        <text x="976" y="299">2093</text>
        <text x="976" y="339">150</text>
      </g>

      <g fill="none" stroke="#9c9c9c">
        <circle cx="1046.500" cy="312" r="149" />
        <circle cx="897" cy="312" r="30" />
        <circle cx="1196" cy="312" r="30" />
        <circle cx="1046.500" cy="163" r="30" />
        <circle cx="1046.500" cy="461" r="30" />
      </g>
      <AxisBubble x={852} y={159} name="G" />
      <AxisBubble x={1038} y={464} name="G" />
      <AxisBubble x={477} y={437} name="8" />
      <AxisBubble x={480} y={464} name="F" />

      <path d="M515 426v-14" stroke="#0000f0" strokeWidth="5" />
      <path d="M509 414l6-8 6 8z" fill="#0000f0" />
      <path d="M515 426l16-4" stroke="#00e000" strokeWidth="4" />
      <path d="M529 416l14 4-12 7z" fill="#00e000" />
      <path d="M515 426l5 8" stroke="#f00000" strokeWidth="4" />
      <path d="M516 435l10-3-1 11z" fill="#f00000" />
      <path d="M510 422h8v8h-8z" fill="#b8b8b8" />
      <text x="544" y="423" fontFamily="DejaVu Sans Mono, monospace" fontSize="15" fill="#00e000">Y</text>
      <text x="523" y="452" fontFamily="DejaVu Sans Mono, monospace" fontSize="15" fill="#f00000">X</text>
    </g>
  </svg>
);

const BarShape = ({ bar }: { bar: Bar }) => {
  const [side, main] = bar.shape;
  return (
    <svg viewBox="0 0 215 45" fontFamily="Liberation Serif, serif" fill="none" stroke="#000" strokeWidth="2">
      {bar.no === '18' && (
        <>
          <path d="M43 15v17h168" />
          <g stroke="none"><text x="15" y="29" fontSize="14" fill="#000">{side}</text><text x="106" y="24" fontSize="14" fill="#f01010">{main}</text></g>
        </>
      )}
      {bar.no === '195' && (
        <>
          <path d="M106 5h60v38h-60zM158 5l-16 11M165 12l-12 13" />
          <g stroke="none"><text x="55" y="30" fontSize="20" fill="#000">{side}</text><text x="107" y="35" fontSize="20" fill="#f01010">{main}</text></g>
        </>
      )}
      {bar.no === '485' && (
        <>
          <path d="M36 36L18 16q-2-7 3-7h187q5 0 3 7l-19 20" />
          <text x="98" y="28" fontSize="15" fill="#000" stroke="none">{main}</text>
        </>
      )}
    </svg>
  );
};

/* Latin runs are set in a half-width face beside full-width Han text. */
const Mixed = ({ children }: { children: string }) => (
  <>
    {children.split(/([\x20-\x7e]+)/).filter(Boolean).map((run, i) =>
      /^[\x20-\x7e]/.test(run) ? <Mono key={i}>{run}</Mono> : <Han key={i}>{run}</Han>,
    )}
  </>
);

/* ---------- sections ---------- */

const Header = () => (
  <TitleBar>
    <LogoCell>
      <svg width="34" height="16" viewBox="0 0 34 16">
        <path d="M1 0h28v6q0 5-5 5H6q-5 0-5-5z" fill="#2384e6" />
        <path d="M12 0h4l3 6q-3 3-6 0z" fill="#cfe6fb" />
        <path d="M33 10v4h-4z" fill="#777" />
      </svg>
    </LogoCell>
    {MENUS.map((m) => <MenuTab key={m} $active={m === '工程量'}>{m}</MenuTab>)}
    <TitleTools>
      <TopSearch>
        <input aria-label="搜索帮助" placeholder="可以合并不同工程的楼层及构件类型吗?" />
        <Magnifier color="#a8a8a8" size={12} />
      </TopSearch>
      <svg width="16" height="14" viewBox="0 0 16 14">
        <path d="M0 0h16v14H0z" fill="#8fc1f8" /><circle cx="8" cy="4" r="4" fill="#fff" /><path d="M2 14q1-5 6-5t6 5z" fill="#fff" />
      </svg>
      <UserName>我就是大柚子</UserName>
      <TopIcon $w={18} aria-label="通知">
        <svg width="14" height="14" viewBox="0 0 14 14"><path d="M2 10V6q0-6 5-6t5 6v4l1 1H1zM5 12h4v1H5z" fill="#8a8a8a" /></svg>
      </TopIcon>
      <TopIcon $w={18} aria-label="消息">
        <svg width="15" height="14" viewBox="0 0 15 14"><ellipse cx="7.500" cy="5.500" rx="7" ry="5.500" fill="#8a8a8a" /><path d="M4 9v4l5-3z" fill="#8a8a8a" /><path d="M4 5.500h8" stroke="#fff" strokeWidth="2" strokeDasharray="2 1" /></svg>
      </TopIcon>
      <TopIcon $w={21} aria-label="帮助">
        <svg width="18" height="14" viewBox="0 0 18 14"><path d="M2 3q0-3 3-3t3 3q0 1.500-3 3.500V8.500M5 10v2" fill="none" stroke="#8a8a8a" strokeWidth="2" /><path d="M12 5h6l-3 3z" fill="#8a8a8a" /></svg>
      </TopIcon>
      <TopIcon $w={18} aria-label="皮肤">
        <svg width="14" height="14" viewBox="0 0 14 14"><path d="M1 2l3-2q3 3 6 0l3 2-1 4-2-1v7H4V5L2 6z" fill="#8a8a8a" /></svg>
      </TopIcon>
      <svg width="9" height="14" viewBox="0 0 9 14"><path d="M9 .5H.5v11H9M0 1h9v2H0zM6 11V6M4 8l2.500-2.500" fill="none" stroke="#8a8a8a" /></svg>
    </TitleTools>
  </TitleBar>
);

const FilterSelect = ({ label, value }: { label: string; value: string }) => (
  <SelectBox>
    <select aria-label={label}><option>{value}</option></select>
    <Caret />
  </SelectBox>
);

const Navigation = () => (
  <NavPanel>
    <NavTitle>导航树</NavTitle>
    <NavTools>
      <svg width="13" height="11" viewBox="0 0 13 11"><path d="M4 3.500v7M.5 7h7M9.500 .5v6M6.500 3.500h6" stroke="#3f8fe8" strokeWidth="2" /></svg>
      <Spacer />
      <ViewToggle aria-label="列表视图">
        <svg width="15" height="15" viewBox="0 0 15 15" fill="none" stroke="#4a98ee"><path d="M1.500 1.500h2v2h-2zM1.500 6.500h2v2h-2zM1.500 11.500h2v2h-2zM6 2.500h8M6 7.500h8M6 12.500h8" /></svg>
      </ViewToggle>
      <ViewToggle aria-label="面板视图">
        <svg width="15" height="15" viewBox="0 0 15 15" fill="none" stroke="#4a98ee"><path d="M.5 2.500h14v11H.5z" fill="#fff" /><path d="M0 2h15v4H0z" fill="#4a98ee" /><path d="M3 4h5" stroke="#fff" strokeDasharray="1 1" /><path d="M3 8.500h8M3 11.500h5" /></svg>
      </ViewToggle>
    </NavTools>
    <NavTree>
      {NAV.map((n) => (
        <React.Fragment key={n.label}>
          <NavItem><Folder open={n.open} />{n.label}</NavItem>
          {n.children?.map(([icon, label]) => (
            <NavChild key={label} $active={label === '柱(Z)'}><NavIcon name={icon} />{label}</NavChild>
          ))}
        </React.Fragment>
      ))}
    </NavTree>
  </NavPanel>
);

const ExpandMark = () => (
  <svg width="7" height="7" viewBox="0 0 7 7"><path d="M7 0v6.500H0z" fill="#222" /></svg>
);

const MemberList = () => (
  <Panel>
    <Strip><button aria-label="关闭"><CloseX /></button></Strip>
    <Tabs><Tab $active>构件列表</Tab><Tab>图纸管理</Tab></Tabs>
    <ListTools>
      <ToolButton><ToolIcon name="add" />新建<Spacer /><Caret /></ToolButton>
      <ToolButton><ToolIcon name="copy" />复制</ToolButton>
      <ToolButton><ToolIcon name="remove" />删除</ToolButton>
      <Spacer />
      <svg width="8" height="6" viewBox="0 0 8 6"><path d="M0 0l3.500 3L0 6zM4.500 0L8 3 4.500 6z" fill="#444" /></svg>
    </ListTools>
    <ListSearch>
      <input aria-label="搜索构件" placeholder="搜索构件..." />
      <Magnifier color="#2f86c8" />
    </ListSearch>
    <ListBody>
      <ul>
        <ListItem $level={0}><ExpandMark />柱</ListItem>
        <ListItem $level={1}><ExpandMark />框架柱</ListItem>
        {MEMBERS.map((m) => (
          <ListItem key={m} $level={2.5}><ListLeaf $active={m === 'GZ1'}>{m}</ListLeaf></ListItem>
        ))}
      </ul>
      <ListThumb $h="85px" />
    </ListBody>
  </Panel>
);

const PropertyList = () => (
  <Panel>
    <Strip><button aria-label="关闭"><CloseX /></button></Strip>
    <Tabs><Tab $active>属性列表</Tab><Tab>图层管理</Tab></Tabs>
    <GridArea>
      <PropTable>
        <colgroup><col style={{ width: 22 }} /><col style={{ width: 101 }} /><col /></colgroup>
        <thead><tr><th /><th>属性名称</th><th>属性值</th></tr></thead>
        <tbody>
          {PROPS.map((p, i) => {
            const [before, after] = p.value.split('|');
            return (
              <tr key={p.name}>
                <th>{i + 1}</th>
                <PropName $plain={p.plain}>{p.name}</PropName>
                <PropValue $group={p.group}>
                  {p.rebar ? <RebarValue>{before}<RebarMark />{after}</RebarValue> : p.value}
                </PropValue>
              </tr>
            );
          })}
          <tr><th /><PropName /><PropValue $group /></tr>
        </tbody>
      </PropTable>
      <ScrollColumn>
        <ScrollArrow />
        <Thumb $h="286px" />
        <Spacer />
        <ScrollArrow down />
      </ScrollColumn>
    </GridArea>
    <PropFooter><OutlineButton $w={80}>截面编辑</OutlineButton></PropFooter>
  </Panel>
);

const Cube = ({ wire }: { wire?: boolean }) => (
  <svg width="24" height="23" viewBox="0 0 24 23" stroke="#2f3844" fill={wire ? '#d3e8ff' : '#8595ae'}>
    <path d="M.5 5.500h17v17H.5z" /><path d="M.5 5.500l6-5h17l-6 5z" fill="#8595ae" /><path d="M17.500 5.500l6-5v17l-6 5z" />
    {wire && <path d="M6 5v12h12M.5 22.500L6 17" fill="none" />}
  </svg>
);

const ViewerTools = () => (
  <ViewTools>
    <ViewTool aria-label="动态观察">
      <svg width="26" height="22" viewBox="0 0 26 22">
        <defs><radialGradient id="ball" cx=".35" cy=".25"><stop offset="0" stopColor="#fff" /><stop offset="1" stopColor="#8193ac" /></radialGradient></defs>
        <circle cx="13" cy="11" r="10" fill="url(#ball)" stroke="#3e4855" /><path d="M1 17q3 3 8-1L21 7" fill="none" stroke="#3e4855" strokeWidth="1.500" />
        <circle cx="21" cy="6" r="4" fill="url(#ball)" stroke="#3e4855" />
      </svg>
    </ViewTool>
    <ViewTool aria-label="二维">
      <svg width="24" height="24" viewBox="0 0 24 24">
        <path d="M.5 .5h23v23H.5z" fill="#8595ae" stroke="#2f3844" />
        <text x="11" y="20" fontSize="9" fontFamily="Liberation Sans, sans-serif" fill="#222">2D</text>
      </svg>
    </ViewTool>
    <ViewTool aria-label="线框"><Cube wire /><Caret color="#333c48" /></ViewTool>
    <ViewTool aria-label="实体"><Cube /><Caret color="#333c48" /></ViewTool>
    <ViewTool aria-label="旋转">
      <svg width="24" height="24" viewBox="0 0 24 24" fill="none" stroke="#333c48" strokeWidth="2.200"><path d="M20 16.500A9.500 9.500 0 1 1 18.500 6" /><path d="M21 1v7h-7" /></svg>
      <Caret color="#333c48" />
    </ViewTool>
    <ToolRule />
    <ViewTool aria-label="显示设置">
      <svg width="24" height="24" viewBox="0 0 24 24" fill="none" stroke="#2f3844">
        <path d="M.5 3.500l2-3h19l2 3v20H.5z" fill="#8595ae" /><path d="M1 3.500h22M11.500 8v13M3 6l2 2 2-3M14 6l2 2 2-3" />
        <path d="M3.500 10.500h2v2h-2zM3.500 14.500h2v2h-2zM3.500 18.500h2v2h-2zM14.500 10.500h2v2h-2zM14.500 14.500h2v2h-2zM14.500 18.500h2v2h-2zM7 11.500h3M7 15.500h3M7 19.500h3M18 11.500h3M18 15.500h3M18 19.500h3" />
      </svg>
    </ViewTool>
  </ViewTools>
);

const STEPS: [string, string, boolean][] = [
  ['首条', 'M1 1v12M9 4L4 7l5 3', true],
  ['上一条', 'M9 4L4 7l5 3', true],
  ['下一条', 'M4 4l5 3-5 3', false],
  ['末条', 'M4 4l5 3-5 3M12 1v12', false],
];

const RebarEditor = () => (
  <EditorPanel>
    <EditorStrip><button aria-label="关闭"><CloseX /></button></EditorStrip>
    <EditorTitle>编辑钢筋</EditorTitle>
    <EditorBody>
      <EditorTools>
        <ToolCluster>
          {STEPS.map(([label, d, off]) => (
            <StepButton key={label} $off={off} aria-label={label}>
              <svg width="14" height="14" viewBox="0 0 14 14"><path d={d} fill="none" strokeWidth="1.200" /></svg>
            </StepButton>
          ))}
          <button aria-label="上移"><ToolIcon name="up" /></button>
          <button aria-label="下移"><ToolIcon name="down" /></button>
          <ToolButton><ToolIcon name="insert" />插入</ToolButton>
        </ToolCluster>
        <ToolButton><ToolIcon name="remove" />删除</ToolButton>
        <ToolButton><ToolIcon name="scale" />缩尺配筋</ToolButton>
        <ToolButton><ToolIcon name="info" />钢筋信息</ToolButton>
        <ToolButton><ToolIcon name="gallery" />钢筋图库</ToolButton>
        <ToolCluster>
          <ToolButton><ToolIcon name="other" />其他<Spacer /><Caret /></ToolButton>
          <span>单构件钢筋总重(kg)：103.183</span>
        </ToolCluster>
      </EditorTools>
      <SheetFrame>
        <SheetTable>
          <colgroup>{SHEET_COLS.map(([, w], i) => <col key={i} style={{ width: w }} />)}</colgroup>
          <thead><tr>{SHEET_COLS.map(([label], i) => <th key={i}>{label}</th>)}</tr></thead>
          <tbody>
            {BARS.map((b, i) => (
              <SheetRow key={b.name}>
                <RowHead $active={i === 0}>{i + 1}</RowHead>
                <td><Mixed>{b.name}</Mixed></td>
                <td><Mono>{b.dia}</Mono></td>
                <td><GradeBox><RebarMark /></GradeBox></td>
                <td><Mono>{b.no}</Mono></td>
                <ShapeCell><BarShape bar={b} /></ShapeCell>
                <td><Formula>{b.formula}</Formula></td>
                <td><Mixed>{b.desc}</Mixed></td>
                <td><Mono>{b.len}</Mono></td>
                <td><Mono>{b.count}</Mono></td>
                <td><Mono>{b.lap}</Mono></td>
                <td><Mono>0</Mono></td>
                <td><Mono>{b.unit}</Mono></td>
                <td><Mono>{b.total}</Mono></td>
                <td><Mixed>{b.kind}</Mixed></td>
                <td><Mixed>{b.joint}</Mixed></td>
                <td><Mixed>普通钢筋</Mixed></td>
              </SheetRow>
            ))}
            <SheetRow $empty>
              <RowHead>9</RowHead>
              {SHEET_COLS.slice(1).map((_, i) => <td key={i} />)}
            </SheetRow>
          </tbody>
        </SheetTable>
        <SheetScroll><SheetThumb /></SheetScroll>
      </SheetFrame>
    </EditorBody>
  </EditorPanel>
);

const LayerRow = ({ label, mark, level, last, locked }: { label: string; mark: Mark; level: number; last?: boolean; locked?: boolean }) => (
  <tr>
    <td>
      <TreeCell>
        {level > 0 && <Guide $w={level === 1 ? 4 : 10} />}
        {level < 2 ? <Expander $root={level === 0} aria-label={`折叠${label}`} /> : <Branch $last={last} />}
        {label}
      </TreeCell>
    </td>
    <CheckCell><Check aria-label={`显示图元 ${label}`} defaultChecked={mark === 'on'} $mixed={mark === 'mixed'} /></CheckCell>
    <CheckCell><Check aria-label={`显示名称 ${label}`} disabled={locked} /></CheckCell>
  </tr>
);

const DisplaySettings = () => (
  <DisplayPanel>
    <Strip />
    <PanelTitle>显示设置</PanelTitle>
    <CardTabs><CardTab $active>图元显示</CardTab><CardTab>楼层显示</CardTab></CardTabs>
    <DisplayArea>
      <DisplayTable>
        <colgroup><col style={{ width: 136 }} /><col style={{ width: 63 }} /><col style={{ width: 63 }} /></colgroup>
        <thead><tr><th>图层构件</th><th>显示图元</th><th>显示名称</th></tr></thead>
        <tbody>
          <LayerRow label="所有构件" mark="mixed" level={0} />
          {LAYERS.map((l) => (
            <React.Fragment key={l.label}>
              <LayerRow label={l.label} mark={l.mark} level={1} locked={l.label === '轴线'} />
              {l.children?.map(([c, m], i) => (
                <LayerRow key={c} label={c} mark={m} level={2} last={l.label !== '板' && i === l.children!.length - 1} locked={l.label === '轴线'} />
              ))}
            </React.Fragment>
          ))}
        </tbody>
      </DisplayTable>
      <EdgeScroll><Thumb $h="228px" /></EdgeScroll>
    </DisplayArea>
    <DisplayFooter><OutlineButton $w={87}>恢复默认设置</OutlineButton></DisplayFooter>
  </DisplayPanel>
);

export default function App() {
  return (
    <Page>
      <GlobalStyle />
      <Header />
      <Ribbon>
        {RIBBON.map((g) => (
          <RibbonGroup key={g.title} $w={g.w}>
            <RibbonRow>
              {g.items.map(([icon, label]) => (
                <RibbonButton key={label} $active={label === '编辑钢筋'}><RibbonIcon name={icon} />{label}</RibbonButton>
              ))}
            </RibbonRow>
            <RibbonTitle>{g.title}</RibbonTitle>
          </RibbonGroup>
        ))}
      </Ribbon>
      <FilterBar>
        <FilterSelect label="楼层" value="基础层" />
        <FilterSelect label="构件分类" value="柱" />
        <FilterSelect label="构件类型" value="柱" />
        <FilterSelect label="构件" value="GZ1" />
      </FilterBar>
      <Workspace>
        <Navigation />
        <MiddleColumn>
          <MemberList />
          <PropertyList />
        </MiddleColumn>
        <CenterColumn>
          <Viewport>
            <Scene />
            <Dialog>
              <DialogTitle>钢筋显示控制面板</DialogTitle>
              <DialogBox>
                {REBAR_CHECKS.map((c) => <CheckRow key={c}><Check defaultChecked />{c}</CheckRow>)}
              </DialogBox>
            </Dialog>
            <ViewerTools />
            <Handle $side="left" aria-label="折叠左侧" />
            <Handle $side="right" aria-label="折叠右侧" />
            <Handle $side="bottom" aria-label="折叠下方"><Caret color="#c9cbd0" /></Handle>
          </Viewport>
          <RebarEditor />
        </CenterColumn>
        <DisplaySettings />
      </Workspace>
    </Page>
  );
}
